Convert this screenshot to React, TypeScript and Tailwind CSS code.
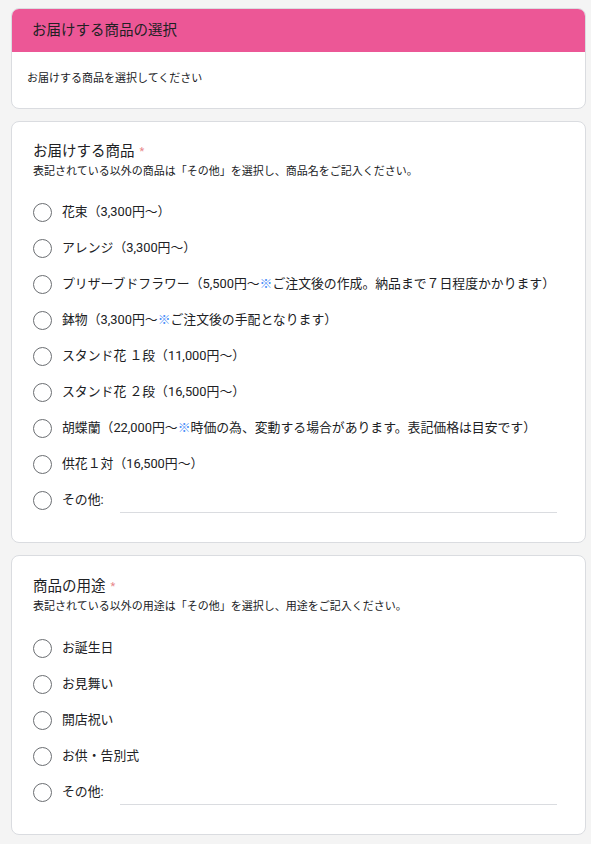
import React from "react";

const FONT = { fontFamily: 'Roboto, "Noto Sans CJK JP", "Noto Sans", sans-serif' };

function Radio({ children, other }: { children: React.ReactNode; other?: boolean }) {
  return (
    <div className="flex h-[36px] items-center">
      <div className="h-[19px] w-[19px] shrink-0 rounded-full border-[1.6px] border-[#6b6e72]" />
      <div className="ml-[10px] whitespace-nowrap text-[12.85px] leading-[18px] text-[#202124]">{children}</div>
      {other && <div className="ml-[16px] mr-[28px] h-[25px] flex-1 border-b border-[#dadce0]" />}
    </div>
  );
}

const Blue = ({ children }: { children: React.ReactNode }) => (
  <span className="text-[#4a8df8]">{children}</span>
);

export default function App() {
  return (
    <div className="min-h-screen bg-[#f4f4f4] pl-[11px] pt-[8px] pb-[8px]" style={FONT}>
      <div className="flex w-[575px] flex-col gap-[12px]">
        <div className="overflow-hidden rounded-[8px] border border-[#dadce0] bg-white">
          <div className="flex h-[43px] items-center bg-[#ec5796] pl-[20px] text-[14.5px] text-[#202124]">
            お届けする商品の選択
          </div>
          <div className="pl-[15px] pt-[20px] pb-[22px] text-[11px] leading-[14px] text-[#202124]">
            お届けする商品を選択してください
          </div>
        </div>

        <div className="rounded-[8px] border border-[#dadce0] bg-white pl-[21px] pt-[20px] pb-[24px]">
          <div className="flex items-center text-[14.5px] leading-[20px] text-[#202124]">
            お届けする商品<span className="ml-[5px] text-[11px] text-[#e8868a]">*</span>
          </div>
          <div className="mt-[2px] text-[11px] leading-[16px] text-[#202124]">
            表記されている以外の商品は「その他」を選択し、商品名をご記入ください。
          </div>
          <div className="mt-[14px] flex flex-col">
            <Radio>花束（3,300円〜）</Radio>
            <Radio>アレンジ（3,300円〜）</Radio>
            <Radio>
              プリザーブドフラワー（5,500円〜<Blue>※</Blue>ご注文後の作成。納品まで７日程度かかります）
            </Radio>
            <Radio>
              鉢物（3,300円〜<Blue>※</Blue>ご注文後の手配となります）
            </Radio>
            <Radio>スタンド花 １段（11,000円〜）</Radio>
            <Radio>スタンド花 ２段（16,500円〜）</Radio>
            <Radio>
              胡蝶蘭（22,000円〜<Blue>※</Blue>時価の為、変動する場合があります。表記価格は目安です）
            </Radio>
            <Radio>供花１対（16,500円〜）</Radio>
            <Radio other>その他:</Radio>
          </div>
        </div>

        <div className="rounded-[8px] border border-[#dadce0] bg-white pl-[21px] pt-[21px] pb-[24px]">
          <div className="flex items-center text-[14.5px] leading-[20px] text-[#202124]">
            商品の用途<span className="ml-[5px] text-[11px] text-[#e8868a]">*</span>
          </div>
          <div className="mt-[2px] text-[11px] leading-[16px] text-[#202124]">
            表記されている以外の用途は「その他」を選択し、用途をご記入ください。
          </div>
          <div className="mt-[15px] flex flex-col">
            <Radio>お誕生日</Radio>
            <Radio>お見舞い</Radio>
            <Radio>開店祝い</Radio>
            <Radio>お供・告別式</Radio>
            <Radio other>その他:</Radio>
          </div>
        </div>
      </div>
    </div>
  );
}
